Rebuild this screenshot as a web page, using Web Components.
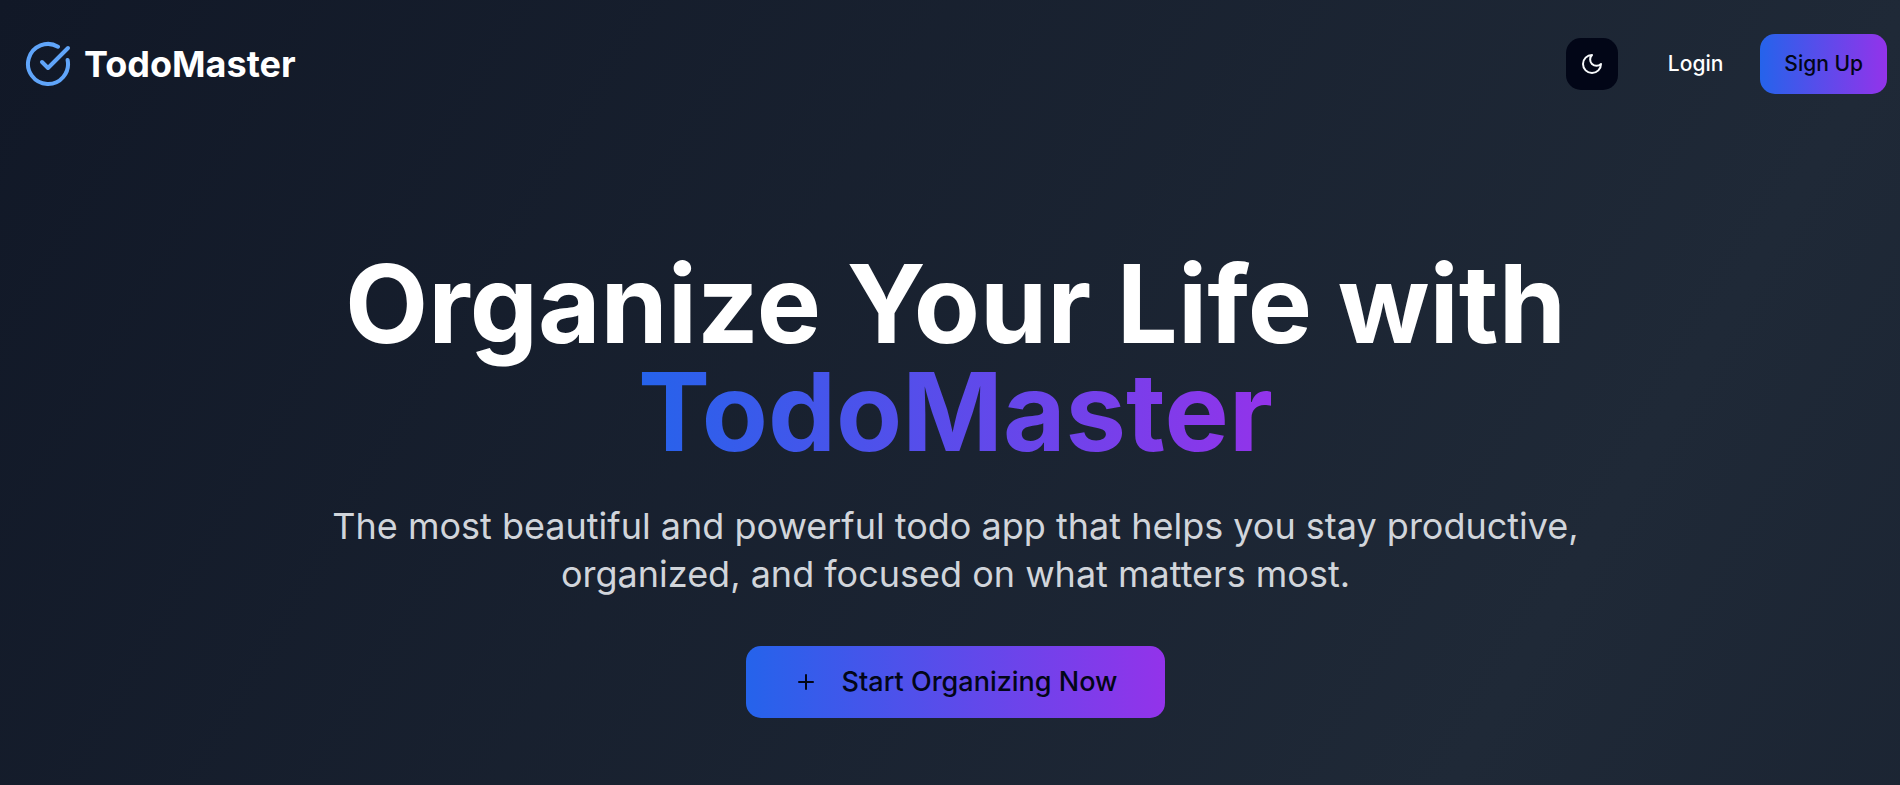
<!DOCTYPE html>
<html lang="en">
<head>
<meta charset="utf-8">
<meta name="viewport" content="width=device-width, initial-scale=1">
<title>TodoMaster</title>
<style>
  html { background: #111827; }
  body { margin: 0; overflow-x: hidden; font-family: Inter, "Liberation Sans", sans-serif; color: #fff; }
</style>
</head>
<body>
<todo-page>
  <todo-header slot="header">
    <todo-brand>TodoMaster</todo-brand>
    <theme-toggle slot="actions"></theme-toggle>
    <todo-button slot="actions" variant="ghost">Login</todo-button>
    <todo-button slot="actions">Sign Up</todo-button>
  </todo-header>
  <todo-hero>
    <span slot="title">Organize Your Life with</span>
    <span slot="accent">TodoMaster</span>
    <span slot="lead">The most beautiful and powerful todo app that helps you stay productive, organized, and focused on what matters most.</span>
    <todo-button slot="action" size="large" icon="plus">Start Organizing Now</todo-button>
  </todo-hero>
</todo-page>
<script>
const define = (name, html) => customElements.define(name, class extends HTMLElement {
  constructor() {
    super();
    const template = document.createElement('template');
    template.innerHTML = html;
    this.attachShadow({ mode: 'open' }).append(template.content.cloneNode(true));
  }
});

define('todo-page', `
  <style>
    :host {
      display: block;
      box-sizing: border-box;
      width: calc(100% + 11px);
      min-height: 100vh;
      padding-bottom: 67px;
      background: linear-gradient(to bottom right, #111827, #1f2937, #111827) 0 0 / 100% 3260px;
    }
  </style>
  <slot name="header"></slot>
  <main><slot></slot></main>`);

define('todo-header', `
  <style>
    :host { display: block; }
    header { display: flex; align-items: center; justify-content: space-between; padding: 34px 24px; }
    nav { display: flex; align-items: center; gap: 12px; }
    ::slotted(theme-toggle) { margin-right: 13px; }
  </style>
  <header><slot></slot><nav aria-label="Account"><slot name="actions"></slot></nav></header>`);

define('todo-brand', `
  <style>
    :host { display: block; }
    a { display: flex; align-items: center; gap: 12px; color: inherit; text-decoration: none; font-size: 36px; line-height: 48px; font-weight: 700; }
    svg { width: 48px; height: 48px; color: #60a5fa; }
  </style>
  <a href="#">
    <svg viewBox="0 0 24 24" fill="none" stroke="currentColor" stroke-width="2" stroke-linecap="round" stroke-linejoin="round" aria-hidden="true">
      <path d="M21.801 10A10 10 0 1 1 17 3.335"/><path d="m9 11 3 3L22 4"/>
    </svg>
    <span><slot></slot></span>
  </a>`);

define('theme-toggle', `
  <style>
    :host { display: block; }
    button { display: grid; place-items: center; width: 52px; height: 52px; padding: 0; border: 0; border-radius: 15px; background: #020617; color: #f8fafc; cursor: pointer; }
    svg { width: 24px; height: 24px; }
  </style>
  <button type="button" aria-label="Toggle theme">
    <svg viewBox="0 0 24 24" fill="none" stroke="currentColor" stroke-width="2" stroke-linecap="round" stroke-linejoin="round" aria-hidden="true">
      <path d="M12 3a6 6 0 0 0 9 9 9 9 0 1 1-9-9Z"/>
    </svg>
  </button>`);

define('todo-button', `
  <style>
    :host { display: inline-block; }
    button {
      display: flex; align-items: center; justify-content: center; gap: 24px;
      height: 60px; padding: 0 24px; border: 0; border-radius: 15px;
      background: linear-gradient(to right, #2563eb, #9333ea);
      color: #020617; font: 500 21px/30px Inter, "Liberation Sans", sans-serif;
      white-space: nowrap; cursor: pointer;
    }
    :host([variant="ghost"]) button { border: 1px solid transparent; background: none; color: #fff; }
    :host([size="large"]) button { height: 72px; padding: 0 48px; font-size: 27px; line-height: 42px; }
    svg { display: none; width: 24px; height: 24px; }
    :host([icon="plus"]) svg { display: block; }
  </style>
  <button type="button">
    <svg viewBox="0 0 24 24" fill="none" stroke="currentColor" stroke-width="2" stroke-linecap="round" aria-hidden="true">
      <path d="M5 12h14"/><path d="M12 5v14"/>
    </svg>
    <span><slot></slot></span>
  </button>`);

define('todo-hero', `
  <style>
    :host { display: block; padding: 122px 24px 0; text-align: center; }
    h1 { margin: 0 0 36px; font-size: 108px; line-height: 108px; font-weight: 700; }
    h1 ::slotted(span) { display: block; }
    .accent { display: block; width: fit-content; margin: 0 auto; background: linear-gradient(to right, #2563eb, #9333ea); -webkit-background-clip: text; background-clip: text; color: transparent; }
    p { max-width: 1344px; margin: 0 auto 48px; font-size: 36px; line-height: 48px; color: #d1d5db; }
  </style>
  <h1><slot name="title"></slot><span class="accent"><slot name="accent"></slot></span></h1>
  <p><slot name="lead"></slot></p>
  <slot name="action"></slot>`);
</script>
</body>
</html>
